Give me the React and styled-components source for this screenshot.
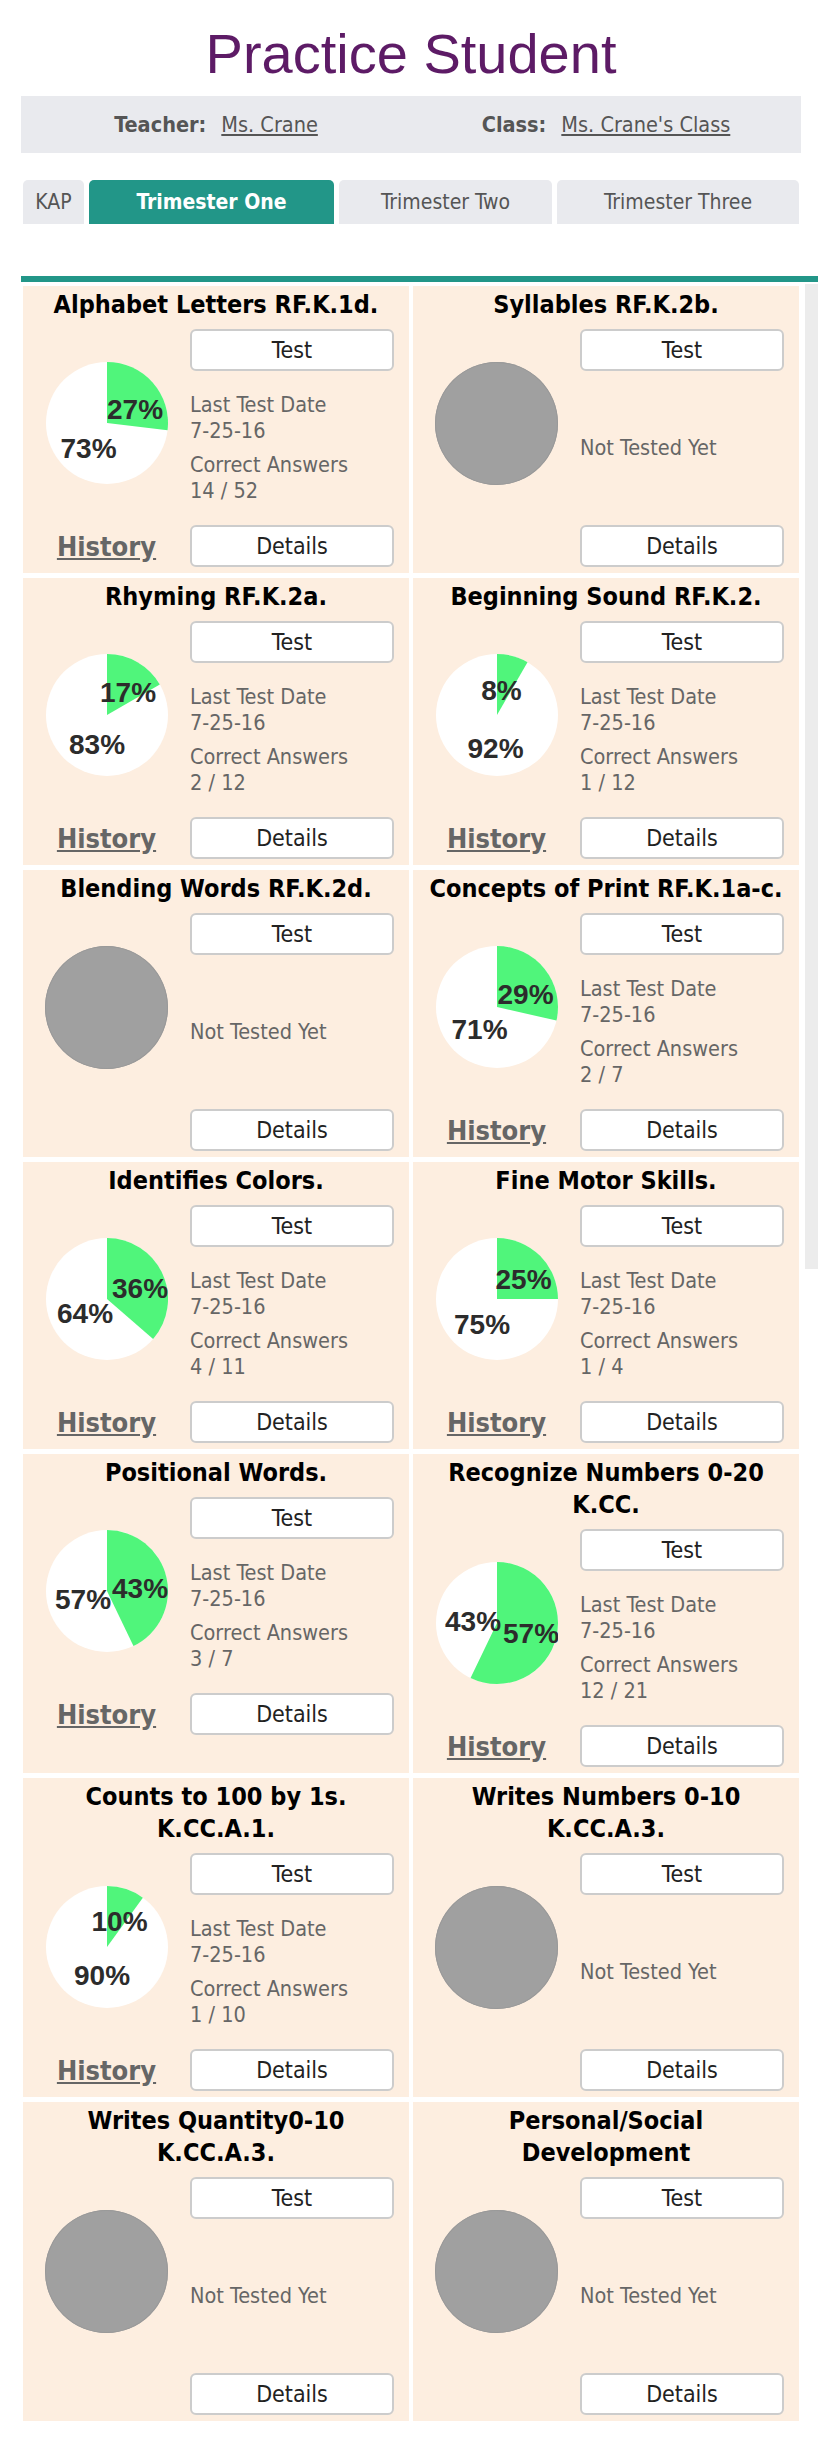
import React from 'react';
import styled, { createGlobalStyle } from 'styled-components';

const GlobalStyle = createGlobalStyle`
    body {
        margin: 0;
        background: #fff;
        font-family: "DejaVu Sans Condensed", "DejaVu Sans", sans-serif;
    }
`;

const Page = styled.div`
    width: 797px;
    padding-left: 21px;
`;

const Title = styled.h1`
    width: 780px;
    margin: 0;
    padding-top: 22px;
    font-family: "Liberation Sans", Arial, sans-serif;
    font-weight: normal;
    font-size: 56px;
    line-height: 64px;
    color: #5d1b66;
    text-align: center;
`;

const InfoBar = styled.div`
    width: 780px;
    height: 57px;
    margin-top: 10px;
    background: #e9eaee;
    display: flex;
    align-items: center;
`;

const InfoItem = styled.div`
    flex: 1;
    display: flex;
    justify-content: center;
    align-items: baseline;
    gap: 15px;
    font-size: 21.5px;
    color: #555;
`;

const InfoLabel = styled.span`
    font-weight: bold;
`;

const InfoLink = styled.a`
    color: #555;
    text-decoration: underline;
`;

const Tabs = styled.div`
    display: flex;
    gap: 5px;
    margin: 27px 2px 0;
`;

const Tab = styled.div`
    width: ${p => p.w}px;
    height: 44px;
    border-radius: 5px 5px 0 0;
    background: ${p => (p.active ? '#229688' : '#e9eaee')};
    color: ${p => (p.active ? '#fff' : '#555')};
    font-weight: ${p => (p.active ? 'bold' : 'normal')};
    font-size: 21px;
    display: flex;
    align-items: center;
    justify-content: center;
`;

const Section = styled.div`
    margin-top: 52px;
    border-top: 6px solid #229688;
    display: flex;
    align-items: flex-start;
`;

const Grid = styled.div`
    width: 776px;
    margin: 4px 0 0 2px;
    display: grid;
    grid-template-columns: 386px 386px;
    column-gap: 4px;
    row-gap: 5px;
`;

const Track = styled.div`
    width: 13px;
    height: 985px;
    margin: 2px 0 0 6px;
    background: #ececec;
`;

const Card = styled.div`
    background: #fdeee0;
    display: flex;
    flex-direction: column;
    padding-bottom: 6px;
`;

const CardTitle = styled.h3`
    margin: 0;
    padding: 3px 10px 0;
    font-size: 25px;
    line-height: 32px;
    font-weight: bold;
    color: #000;
    text-align: center;
`;

const CardBody = styled.div`
    display: grid;
    grid-template-columns: 1fr 204px;
    margin-right: 15px;
`;

const LeftCol = styled.div`
    display: flex;
    flex-direction: column;
`;

const PieArea = styled.div`
    flex: 1;
    display: flex;
    align-items: center;
    justify-content: center;
`;

const HistoryRow = styled.div`
    height: 42px;
    display: flex;
    align-items: center;
    justify-content: center;
`;

const HistoryLink = styled.a`
    font-size: 27px;
    font-weight: bold;
    color: #666;
    text-decoration: underline;
`;

const RightCol = styled.div`
    display: flex;
    flex-direction: column;
`;

const Button = styled.button`
    height: 42px;
    margin-top: ${p => p.top || 0}px;
    border: 2px solid #ccc;
    border-radius: 6px;
    background: #fff;
    color: #222;
    font-family: inherit;
    font-size: 23px;
    padding: 0;
`;

const Info = styled.div`
    height: 154px;
    display: flex;
    flex-direction: column;
    justify-content: center;
    font-size: 21.5px;
    line-height: 26.5px;
    color: #666;
`;

const InfoGroup = styled.div`
    & + & {
        margin-top: 7px;
    }
`;

const GrayDot = styled.div`
    width: 123px;
    height: 123px;
    border-radius: 50%;
    background: #a0a0a0;
    box-shadow: inset 0 0 0 1px #999;
`;

const PieLabel = styled.text`
    font-family: "Liberation Sans", Arial, sans-serif;
    font-weight: bold;
    font-size: 28px;
    fill: #2c2c2c;
`;

const R = 61;

const Pie = ({ correct, total, labels }) => {
    const frac = correct / total;
    const a = frac * 2 * Math.PI;
    const x = R + R * Math.sin(a);
    const y = R - R * Math.cos(a);
    const large = frac > 0.5 ? 1 : 0;
    const pct = Math.round(frac * 100);
    return (
        <svg width={2 * R} height={2 * R} viewBox={`0 0 ${2 * R} ${2 * R}`}>
            <circle cx={R} cy={R} r={R} fill="#fff" />
            <path d={`M${R} ${R} L${R} 0 A${R} ${R} 0 ${large} 1 ${x} ${y} Z`} fill="#50f57b" />
            <PieLabel x={R + labels[0][0]} y={R + labels[0][1] + 10} textAnchor="middle">{pct}%</PieLabel>
            <PieLabel x={R + labels[1][0]} y={R + labels[1][1] + 10} textAnchor="middle">{100 - pct}%</PieLabel>
        </svg>
    );
};

const tabs = [
    { name: 'KAP', w: 61 },
    { name: 'Trimester One', w: 245, active: true },
    { name: 'Trimester Two', w: 213 },
    { name: 'Trimester Three', w: 242 },
];

const cards = [
    { title: 'Alphabet Letters RF.K.1d.', correct: 14, total: 52, labels: [[28, -14], [-18.5, 25]] },
    { title: 'Syllables RF.K.2b.' },
    { title: 'Rhyming RF.K.2a.', correct: 2, total: 12, labels: [[21, -23], [-10, 29]] },
    { title: 'Beginning Sound RF.K.2.', correct: 1, total: 12, labels: [[4.5, -25], [-1.5, 33]] },
    { title: 'Blending Words RF.K.2d.' },
    { title: 'Concepts of Print RF.K.1a-c.', correct: 2, total: 7, labels: [[28.5, -13.5], [-17.5, 22]] },
    { title: 'Identifies Colors.', correct: 4, total: 11, labels: [[33, -11], [-22, 14]] },
    { title: 'Fine Motor Skills.', correct: 1, total: 4, labels: [[26.5, -20], [-15, 25]] },
    { title: 'Positional Words.', correct: 3, total: 7, labels: [[33, -3], [-24, 8]] },
    { title: 'Recognize Numbers 0-20 K.CC.', correct: 12, total: 21, labels: [[34, 9.5], [-24, -2.5]] },
    { title: 'Counts to 100 by 1s. K.CC.A.1.', correct: 1, total: 10, labels: [[12.5, -26.5], [-5, 28]] },
    { title: 'Writes Numbers 0-10 K.CC.A.3.' },
    { title: 'Writes Quantity0-10 K.CC.A.3.' },
    { title: 'Personal/Social Development' },
];

const SkillCard = ({ title, correct, total, labels }) => {
    const tested = total !== undefined;
    return (
        <Card>
            <CardTitle>{title}</CardTitle>
            <CardBody>
                <LeftCol>
                    <PieArea>
                        {tested ? <Pie correct={correct} total={total} labels={labels} /> : <GrayDot />}
                    </PieArea>
                    <HistoryRow>{tested && <HistoryLink>History</HistoryLink>}</HistoryRow>
                </LeftCol>
                <RightCol>
                    <Button top={8}>Test</Button>
                    <Info>
                        {tested ? (
                            <>
                                <InfoGroup>
                                    <div>Last Test Date</div>
                                    <div>7-25-16</div>
                                </InfoGroup>
                                <InfoGroup>
                                    <div>Correct Answers</div>
                                    <div>{correct} / {total}</div>
                                </InfoGroup>
                            </>
                        ) : (
                            <div>Not Tested Yet</div>
                        )}
                    </Info>
                    <Button>Details</Button>
                </RightCol>
            </CardBody>
        </Card>
    );
};

const App = () => (
    <Page>
        <GlobalStyle />
        <Title>Practice Student</Title>
        <InfoBar>
            <InfoItem>
                <InfoLabel>Teacher:</InfoLabel>
                <InfoLink>Ms. Crane</InfoLink>
            </InfoItem>
            <InfoItem>
                <InfoLabel>Class:</InfoLabel>
                <InfoLink>Ms. Crane's Class</InfoLink>
            </InfoItem>
        </InfoBar>
        <Tabs>
            {tabs.map(t => (
                <Tab key={t.name} w={t.w} active={t.active}>{t.name}</Tab>
            ))}
        </Tabs>
        <Section>
            <Grid>
                {cards.map(c => <SkillCard key={c.title} {...c} />)}
            </Grid>
            <Track />
        </Section>
    </Page>
);

export default App;
